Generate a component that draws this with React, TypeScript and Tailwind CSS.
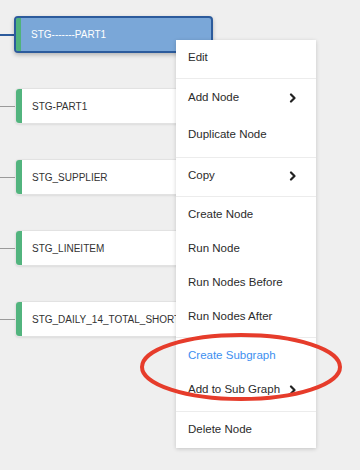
import React from "react";

type Item = { label: string; sub?: boolean; blue?: boolean; h?: string };

const sections: Item[][] = [
  [{ label: "Edit" }],
  [
    { label: "Add Node", sub: true, h: "h-[37px]" },
    { label: "Duplicate Node", h: "h-[37px]" },
  ],
  [{ label: "Copy", sub: true }],
  [
    { label: "Create Node" },
    { label: "Run Node" },
    { label: "Run Nodes Before" },
    { label: "Run Nodes After" },
  ],
  [{ label: "Create Subgraph", blue: true }, { label: "Add to Sub Graph", sub: true }],
  [{ label: "Delete Node" }],
];

const nodes = ["STG-PART1", "STG_SUPPLIER", "STG_LINEITEM", "STG_DAILY_14_TOTAL_SHORTAGE"];

function Chevron() {
  return (
    <svg width="8" height="10" viewBox="0 0 8 10" className="ml-auto">
      <polyline
        points="2,1.5 5.5,5 2,8.5"
        fill="none"
        stroke="#222"
        strokeWidth="2.2"
        strokeLinecap="round"
        strokeLinejoin="round"
      />
    </svg>
  );
}

function NodeRow({ label, active }: { label: string; active?: boolean }) {
  return (
    <div className="flex items-center">
      <div className={active ? "w-[14px] h-[2px] bg-[#2c5b9c]" : "w-[15px] h-px bg-[#9a9a9a]"}></div>
      <div
        className={
          active
            ? "w-[199px] h-[37px] flex items-stretch rounded-[4px] border-2 border-[#2c5b9c] bg-[#7aa7d8] overflow-hidden shadow-[0_2px_4px_rgba(0,0,0,0.25)]"
            : "w-[199px] h-[36px] flex items-stretch rounded-[4px] border border-[#e2e2e2] bg-white overflow-hidden shadow-[0_1px_2px_rgba(0,0,0,0.08)]"
        }
      >
        <div className={active ? "w-[5px] bg-[#4fb27b]" : "w-[6px] bg-[#52b47e]"}></div>
        <div
          className={
            active
              ? "flex items-center pl-[10px] text-[10px] font-medium text-white whitespace-nowrap"
              : "flex items-center pl-[10px] text-[10px] text-[#333] whitespace-nowrap"
          }
        >
          {label}
        </div>
      </div>
    </div>
  );
}

export default function App() {
  return (
    <div className="relative w-[360px] h-[470px] bg-[#efefef] overflow-hidden font-['Liberation_Sans',Arial,sans-serif]">
      <div className="flex flex-col pt-[16px] gap-[35px]">
        <NodeRow label="STG-------PART1" active />
        {nodes.map((n) => (
          <NodeRow key={n} label={n} />
        ))}
      </div>

      <div className="absolute left-[176px] top-[40px] w-[140px] bg-white shadow-[0_1px_4px_rgba(0,0,0,0.18)] text-[11.5px] text-[#2b2b2b]">
        {sections.map((sec, i) => (
          <div
            key={i}
            className={
              i === 4
                ? "pb-[5px] border-b border-[#ececec]"
                : i === sections.length - 1
                ? "pb-[2px]"
                : "pb-[4px] border-b border-[#ececec]"
            }
          >
            {sec.map((it) => (
              <div
                key={it.label}
                className={`flex items-center pl-[12px] pr-[19px] pt-[1px] ${it.h ?? "h-[34px]"} ${
                  it.blue ? "text-[#3d8ff0]" : ""
                }`}
              >
                <span>{it.label}</span>
                {it.sub && <Chevron />}
              </div>
            ))}
          </div>
        ))}
      </div>

      <svg className="absolute left-0 top-0 pointer-events-none" width="360" height="470">
        <ellipse cx="241" cy="367" rx="99" ry="32" fill="none" stroke="#e63c2b" strokeWidth="4" />
      </svg>
    </div>
  );
}
